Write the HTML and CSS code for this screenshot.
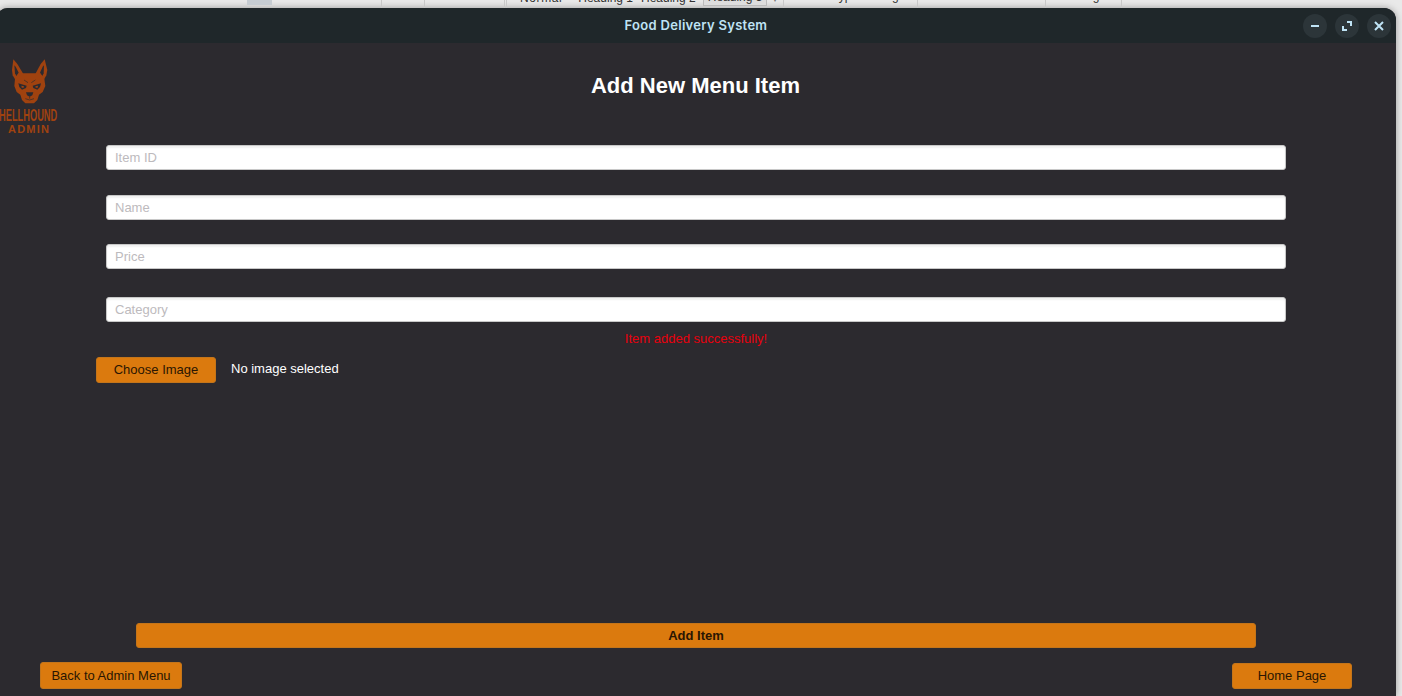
FILE: index.html
```html
<!DOCTYPE html>
<html lang="en">
    <head>
        <meta charset="UTF-8">
        <title>Food Delivery System</title>
        <link rel="stylesheet" href="styles.css">
    </head>
    <body>
        <div class="behind">
            <div class="cell c1"><span class="picked"></span></div>
            <div class="cell c2"></div>
            <div class="cell c3"></div>
            <div class="cell c4">
                <span class="normal">Normal</span><span>Heading 1</span><span>Heading 2</span><span class="boxed">Heading 3</span><span class="arrow">▾</span>
            </div>
            <div class="cell c5"><span class="t1">Type Setting</span></div>
            <div class="cell c6"></div>
            <div class="cell c7"><span class="t2">Page</span></div>
        </div>

        <div class="window">
            <div class="titlebar">
                <span class="apptitle">Food Delivery System</span>
                <div class="controls">
                    <button class="ctl" aria-label="Minimize">
                        <svg width="10" height="10" viewBox="0 0 10 10"><path d="M1 5h8" stroke="#bfe3f5" stroke-width="2"/></svg>
                    </button>
                    <button class="ctl" aria-label="Maximize">
                        <svg width="12" height="12" viewBox="0 0 12 12"><path d="M6 2h4v4M2 6v4h4" fill="none" stroke="#bfe3f5" stroke-width="2"/></svg>
                    </button>
                    <button class="ctl" aria-label="Close">
                        <svg width="10" height="10" viewBox="0 0 10 10"><path d="M1 1l8 8M9 1l-8 8" stroke="#bfe3f5" stroke-width="2"/></svg>
                    </button>
                </div>
            </div>

            <div class="content">
                <div class="logo">
                    <svg width="70" height="56" viewBox="0 0 210 168">
                        <path class="fur" d="M40 28L52 42L70 72L50 96L38 76L36 60Z"/>
                        <path class="fur" d="M134 28L122 42L106 72L128 96L139 76L142 60Z"/>
                        <path class="dark" d="M43 46L47 50L56 68L49 78L45 70Z"/>
                        <path class="dark" d="M132 46L128 50L120 68L127 78L131 70Z"/>
                        <path class="fur" d="M56 70L120 70L133 86L136 108L128 126L117 134L112 150L102 160L76 160L66 150L61 134L50 126L43 108L45 86Z"/>
                        <path class="dark" d="M55 100L80 107L78 114L66 119L58 111Z"/>
                        <path class="dark" d="M123 100L98 107L100 114L112 119L120 111Z"/>
                        <path class="fur" d="M64 107L72 109L71 113L65 113Z"/>
                        <path class="fur" d="M114 107L106 109L107 113L113 113Z"/>
                        <path class="dark" d="M78 127L100 127L97 136L89 140L81 136Z"/>
                        <path class="line" d="M89 140V146M76 146Q89 154 102 146M72 90L84 98M106 90L94 98"/>
                    </svg>
                    <div class="brand">HELLHOUND</div>
                    <div class="role">ADMIN</div>
                </div>

                <h1>Add New Menu Item</h1>

                <div class="form">
                    <input class="field gap-m" placeholder="Item ID">
                    <input class="field gap-s" placeholder="Name">
                    <input class="field gap-l" placeholder="Price">
                    <input class="field" placeholder="Category">
                </div>

                <div class="status">Item added successfully!</div>

                <div class="imagerow">
                    <button class="btn choose">Choose Image</button>
                    <span class="imagelabel">No image selected</span>
                </div>

                <div class="actions">
                    <button class="btn additem">Add Item</button>
                    <div class="navrow">
                        <button class="btn back">Back to Admin Menu</button>
                        <button class="btn home">Home Page</button>
                    </div>
                </div>
            </div>
        </div>
    </body>
</html>
```

FILE: styles.css
```css
*{
    margin: 0;
    padding: 0;
    box-sizing: border-box;
}
html, body{
    height: 696px;
    overflow: hidden;
}
body{
    background: #e9e9e9;
    font-family: "Liberation Sans", Arial, sans-serif;
    font-size: 13px;
}

/* the document window peeking out above the app */
.behind{
    height: 8px;
    display: flex;
    overflow: hidden;
    color: #333;
    font-size: 12px;
    line-height: 14px;
}
.cell{
    border-right: 1px solid #c9c9c9;
    height: 8px;
    white-space: nowrap;
}
.c1{ width: 382px; padding-left: 247px; }
.c2{ width: 43px; }
.c3{ width: 82px; border-right: 3px double #c9c9c9; }
.c4{ width: 277px; padding-left: 13px; display: flex; }
.c5{ width: 134px; padding-left: 48px; }
.c6{ width: 128px; }
.c7{ width: 76px; padding-left: 32px; }
.picked{
    display: block;
    width: 25px;
    height: 5px;
    background: #c6ccd2;
}
.c4 span{
    margin-top: -9px;
    margin-right: 8px;
    height: 17px;
}
.c4 .normal{
    margin-right: 16px;
    letter-spacing: .6px;
}
.c4 .boxed{
    border: 1px solid #bbb;
    background: #ddd;
    padding: 0 4px;
    margin-right: 5px;
    margin-left: -1px;
    height: 14px;
    margin-top: -8px;
    line-height: 8px;
}
.c4 .arrow{
    color: #777;
    margin-top: -9px;
}
.t1, .t2{
    display: block;
    margin-top: -11px;
}

.window{
    width: 1400px;
    height: 688px;
    margin-left: -4px;
    background: #2c2a2f;
    border-radius: 12px 12px 0 0;
    box-shadow: 0 0 7px rgba(0,0,0,.35);
    overflow: hidden;
    display: flex;
    flex-direction: column;
}
.titlebar{
    height: 35px;
    background: #1f272a;
    position: relative;
    display: flex;
    align-items: center;
    justify-content: center;
}
.apptitle{
    font-family: Inter, "Liberation Sans", sans-serif;
    font-weight: 600;
    font-size: 13px;
    letter-spacing: .3px;
    padding-bottom: 2px;
    color: #bfe3f5;
}
.controls{
    position: absolute;
    top: 6px;
    right: 5px;
    display: flex;
    gap: 8px;
}
.ctl{
    width: 24px;
    height: 24px;
    border: none;
    border-radius: 50%;
    background: #2c3539;
    display: flex;
    align-items: center;
    justify-content: center;
}

.content{
    flex: 1;
    position: relative;
    display: flex;
    flex-direction: column;
    padding-bottom: 7px;
}
.logo{
    position: absolute;
    top: 7px;
    left: 4px;
    width: 70px;
    color: #a0420f;
}
.logo svg{
    display: block;
}
.fur{ fill: #a0420f; }
.dark{ fill: #2c2a2f; }
.line{
    fill: none;
    stroke: #2c2a2f;
    stroke-width: 2;
}
.brand{
    font-size: 16px;
    font-weight: bold;
    line-height: 14px;
    width: 104px;
    margin-top: 3px;
    margin-left: -1px;
    transform: scaleX(.58);
    transform-origin: left center;
    white-space: nowrap;
}
.role{
    font-size: 11px;
    font-weight: bold;
    line-height: 12px;
    letter-spacing: 1.2px;
    margin-left: 8px;
}

h1{
    font-size: 22px;
    line-height: 26px;
    font-weight: bold;
    text-align: center;
    color: #fff;
    padding-top: 30px;
    padding-right: 1px;
}

.form{
    margin: 46px 110px 0;
    display: flex;
    flex-direction: column;
}
.field{
    height: 25px;
    border: 1px solid #c8c8c8;
    border-radius: 3px;
    background: #fff;
    padding: 0 8px;
    font: 13px "Liberation Sans", Arial, sans-serif;
    box-shadow: inset 0 2px 2px rgba(0,0,0,.06);
    outline: none;
}
.field::placeholder{
    color: #bdbabd;
}
.gap-s{ margin-bottom: 24px; }
.gap-m{ margin-bottom: 25px; }
.gap-l{ margin-bottom: 28px; }

.status{
    margin-top: 9px;
    line-height: 16px;
    text-align: center;
    color: #e8000d;
}

.imagerow{
    margin: 10px 0 0 100px;
    display: flex;
    align-items: flex-start;
    gap: 15px;
}
.imagelabel{
    color: #fff;
    line-height: 24px;
}

.btn{
    background: #db7a0e;
    border: 1px solid #c4751a;
    border-radius: 3px;
    color: #2a1602;
    font: 13px "Liberation Sans", Arial, sans-serif;
}
.choose, .home{
    width: 120px;
    height: 26px;
    padding-bottom: 2px;
}
.actions{
    margin-top: auto;
    display: flex;
    flex-direction: column;
}
.additem{
    margin: 0 140px;
    height: 25px;
    font-weight: bold;
}
.navrow{
    margin: 14px 44px 0;
    display: flex;
    justify-content: space-between;
    align-items: flex-end;
}
.back{
    width: 142px;
    height: 27px;
}
```
